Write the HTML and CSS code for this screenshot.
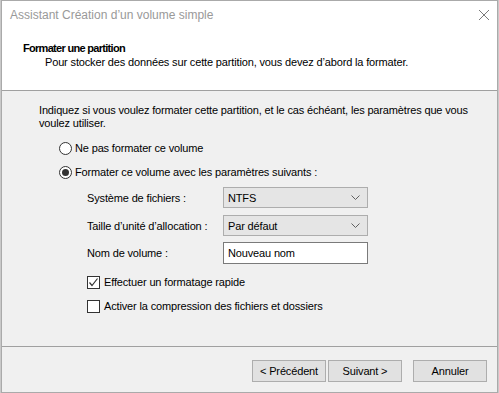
FILE: index.html
```html
<!DOCTYPE html>
<html lang="fr">
<head>
<meta charset="utf-8">
<title>Assistant Création d'un volume simple</title>
<link rel="stylesheet" href="styles.css">
</head>
<body>
<div class="window">
  <div class="titlebar">
    <span class="title">Assistant Création d’un volume simple</span>
    <svg class="close" width="12" height="12" viewBox="0 0 12 12"><path d="M1 1 L11 11 M11 1 L1 11" stroke="#7a7a7a" stroke-width="1" fill="none"/></svg>
  </div>
  <div class="header">
    <div class="h-title">Formater une partition</div>
    <div class="h-sub">Pour stocker des données sur cette partition, vous devez d’abord la formater.</div>
  </div>
  <div class="sep"></div>
  <div class="body">
    <p class="intro">Indiquez si vous voulez formater cette partition, et le cas échéant, les paramètres que vous voulez utiliser.</p>
    <div class="radio-row"><span class="radio"></span><span>Ne pas formater ce volume</span></div>
    <div class="radio-row"><span class="radio on"></span><span>Formater ce volume avec les paramètres suivants :</span></div>
    <div class="grid">
      <div class="lbl">Système de fichiers :</div>
      <div class="select"><span>NTFS</span><svg width="9" height="5" viewBox="0 0 9 5"><path d="M0.5 0.5 L4.5 4.5 L8.5 0.5" stroke="#606060" fill="none"/></svg></div>
      <div class="lbl">Taille d’unité d’allocation :</div>
      <div class="select"><span>Par défaut</span><svg width="9" height="5" viewBox="0 0 9 5"><path d="M0.5 0.5 L4.5 4.5 L8.5 0.5" stroke="#606060" fill="none"/></svg></div>
      <div class="lbl">Nom de volume :</div>
      <div class="input">Nouveau nom</div>
    </div>
    <div class="checks">
      <div class="check-row"><span class="box"><svg width="11" height="11" viewBox="0 0 11 11"><path d="M1.5 5.5 L4 8.5 L9.5 1.5" stroke="#333" stroke-width="1.2" fill="none"/></svg></span><span>Effectuer un formatage rapide</span></div>
      <div class="check-row"><span class="box"></span><span>Activer la compression des fichiers et dossiers</span></div>
    </div>
  </div>
  <div class="sep"></div>
  <div class="footer">
    <button class="btn">&lt; Précédent</button>
    <button class="btn">Suivant &gt;</button>
    <button class="btn cancel">Annuler</button>
  </div>
</div>
</body>
</html>
```
FILE: styles.css
```css
html, body {
  margin: 0;
  padding: 0;
  background: #c9c9c9;
}
body {
  width: 499px;
  height: 393px;
  overflow: hidden;
  font-family: "Liberation Sans", Arial, sans-serif;
  font-size: 11px;
  letter-spacing: -0.15px;
  color: #000;
}
.window {
  margin-left: 1px;
  width: 497px;
  height: 393px;
  box-sizing: border-box;
  border: 1px solid #aaaaaa;
  background: #f0f0f0;
  display: flex;
  flex-direction: column;
}
.titlebar {
  height: 28px;
  background: #fff;
  display: flex;
  align-items: center;
  padding-left: 8px;
  padding-right: 7px;
}
.title {
  flex: 1;
  font-size: 12px;
  letter-spacing: 0;
  color: #999;
}
.close {
  margin-top: -1px;
}
.header {
  height: 61px;
  background: #fff;
  box-sizing: border-box;
  padding-top: 12px;
  line-height: 14px;
}
.h-title {
  font-weight: bold;
  letter-spacing: -0.7px;
  padding-left: 21px;
}
.h-sub {
  padding-left: 43px;
}
.sep {
  height: 1px;
  background: #a0a0a0;
}
.body {
  flex: 1;
  padding: 13px 0 0 37px;
  box-sizing: border-box;
}
.intro {
  margin: 0;
  width: 432px;
  line-height: 13px;
}
.radio-row {
  height: 24px;
  display: flex;
  align-items: center;
  padding-left: 20px;
}
.radio-row:first-of-type {
  margin-top: 6px;
}
.radio {
  width: 11px;
  height: 11px;
  border: 1px solid #333;
  border-radius: 50%;
  background: #fff;
  margin-right: 3px;
  display: flex;
  align-items: center;
  justify-content: center;
}
.radio.on::after {
  content: "";
  width: 7px;
  height: 7px;
  border-radius: 50%;
  background: #333;
}
.grid {
  margin-top: 3px;
  margin-left: 48px;
  display: grid;
  grid-template-columns: 136px 145px;
  grid-template-rows: 21px 21px 22px;
  row-gap: 7px;
  align-items: center;
}
.grid > :nth-child(5), .grid > :nth-child(6) {
  margin-top: -2px;
}
.select {
  height: 21px;
  box-sizing: border-box;
  border: 1px solid #adadad;
  background: #e5e5e5;
  display: flex;
  align-items: center;
  justify-content: space-between;
  padding: 0 7px 0 4px;
}
.input {
  height: 22px;
  box-sizing: border-box;
  border: 1px solid #7a7a7a;
  background: #fff;
  display: flex;
  align-items: center;
  padding-left: 4px;
}
.checks {
  margin-top: 5px;
  margin-left: 48px;
}
.check-row {
  height: 24px;
  display: flex;
  align-items: center;
}
.box {
  width: 11px;
  height: 11px;
  border: 1px solid #333;
  background: #fff;
  margin-right: 4px;
  display: flex;
  align-items: center;
  justify-content: center;
}
.footer {
  height: 45px;
  box-sizing: border-box;
  padding: 13px 10px 0 0;
  display: flex;
  justify-content: flex-end;
  align-items: flex-start;
  gap: 2px;
}
.btn {
  width: 74px;
  height: 22px;
  border: 1px solid #adadad;
  background: #e1e1e1;
  font-family: "Liberation Sans", Arial, sans-serif;
  font-size: 11px;
  letter-spacing: -0.15px;
  color: #000;
  padding: 0;
}
.btn.cancel {
  margin-left: 9px;
}
```
